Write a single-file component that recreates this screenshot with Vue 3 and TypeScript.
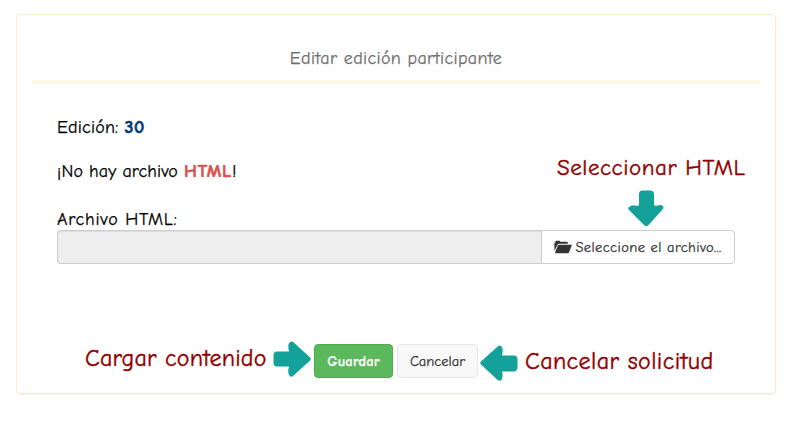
<script setup lang="ts">
import { ref } from 'vue'

const edition = ref<number>(30)
const fileName = ref<string>('')
</script>

<template>
  <main class="page">
    <section class="panel">
      <header class="heading"><span class="title">Editar edición participante</span></header>
      <form class="body" @submit.prevent>
        <p class="line edition"><span class="t-edition">Edición:</span> <b class="number">{{ edition }}</b></p>
        <p class="line notice"><span class="t-notice">¡No hay archivo</span> <b class="missing">HTML</b>!</p>
        <label class="line label" for="file">Archivo HTML:</label>
        <div class="picker">
          <input id="file" v-model="fileName" class="filename" type="text" disabled />
          <button class="btn browse" type="button">
            <svg class="folder" viewBox="0 0 18 14" aria-hidden="true">
              <path d="M.4 11V2.8H1.4V1.6Q1.4 .8 2.2 .8H5.4Q6.2 .8 6.3 1.8H12.8Q13.8 1.8 13.8 2.8V3.8H5.2Q4 3.8 3.5 4.8Z" />
              <path d="M5.2 4.7H17.2Q18 4.7 17.7 5.5L15 12.4Q14.6 13.2 13.7 13.2H1.6Q.8 13.2 1.1 12.4L3.9 5.5Q4.3 4.7 5.2 4.7Z" />
            </svg>
            <span class="t-browse">Seleccione el archivo...</span>
          </button>
        </div>
        <footer class="actions">
          <button class="btn save" type="submit"><span>Guardar</span></button>
          <button class="btn cancel" type="button"><span>Cancelar</span></button>
        </footer>
      </form>
    </section>

    <span class="note note-select">Seleccionar HTML</span>
    <span class="note note-save">Cargar contenido</span>
    <span class="note note-cancel">Cancelar solicitud</span>
    <svg class="arrow arrow-select" viewBox="0 0 36 37" aria-hidden="true">
      <path d="M11 4Q11 .5 14.5 .5H22Q26 .5 26 4.5V15.5Q29 16 32 15Q35 15 35.5 17.5Q35.5 18.5 34 20L20 35.5Q18.5 37 16.5 35.5L1 20Q-.5 18.5 1 17Q4 14.5 8 15.8L11 15.5Z" />
    </svg>
    <svg class="arrow arrow-save" viewBox="0 0 38 36" aria-hidden="true">
      <path d="M4 10.5H16Q15 6.5 15.5 3.5Q16.5 0 20 .7L37 16.5Q38.5 18 37 19.5L20 35Q18 37 16 34Q14.5 30 16 25.5H4Q.5 25.5 .5 22V14Q.5 10.5 4 10.5Z" />
    </svg>
    <svg class="arrow arrow-cancel" viewBox="0 0 38 36" aria-hidden="true">
      <path d="M34 10.5H22Q23 6.5 22.5 3.5Q21.5 0 18.5 .7L1 16.5Q-.5 18 1 19.5L17 34.5Q19 36.5 21.5 35Q23.5 30.5 22 26.5H34Q37.5 26 37.5 22.5V14Q37.5 10.5 34 10.5Z" />
    </svg>
  </main>
</template>

<style>
body { margin: 0; background: #fff; }
</style>

<style scoped>
* { box-sizing: border-box; }
.page {
  position: relative;
  height: 428px;
  padding: 14px 13px 0 16px;
  overflow: hidden;
  font-family: "Comic Sans MS", "Comic Neue", Lato, sans-serif;
  font-size: 18px;
  color: #000;
  -webkit-text-stroke: .25px currentColor;
}
.panel {
  height: 380px;
  padding: 0 15px;
  border: 1px solid #faebcc;
  border-radius: 4px;
  box-shadow: 0 1px 1px rgba(0, 0, 0, .05);
}
.heading {
  height: 69px;
  padding-top: 33px;
  border-bottom: 4px solid #fcf8e3;
  line-height: 22px;
  text-align: center;
  color: #707070;
}
.title { letter-spacing: .35px; }
.body { padding: 32px 25px 0; }
.line { display: block; margin: 0; height: 24px; line-height: 24px; white-space: nowrap; }
.t-edition { letter-spacing: .2px; }
.t-notice { letter-spacing: .08px; }
.notice { margin-top: 20px; }
.label { margin-top: 24px; height: 22px; letter-spacing: .75px; }
.number { color: #003a75; letter-spacing: .6px; -webkit-text-stroke: .6px currentColor; }
.missing { color: #d9534f; letter-spacing: .8px; -webkit-text-stroke: .6px currentColor; }
.picker { display: flex; height: 34px; }
.filename {
  flex: 1;
  min-width: 0;
  border: 1px solid #ccc;
  border-right: 0;
  border-radius: 4px 0 0 4px;
  background: #eee;
  box-shadow: inset 0 1px 1px rgba(0, 0, 0, .075);
}
.btn {
  display: flex;
  align-items: center;
  justify-content: center;
  height: 34px;
  padding: 0;
  border: 1px solid #ccc;
  border-radius: 4px;
  background: #fff;
  color: #333;
  font: 14.5px "Comic Sans MS", "Comic Neue", Lato, sans-serif;
  white-space: nowrap;
}
.browse { width: 194px; gap: 3px; border-radius: 0 4px 4px 0; }
.t-browse { letter-spacing: .4px; }
.folder { width: 18px; height: 14px; fill: #333; }
.actions { display: flex; justify-content: center; gap: 4px; margin-top: 80px; }
.save { width: 79px; border-color: #4cae4c; background: #5cb85c; color: #fff; font-weight: 700; letter-spacing: .15px; }
.cancel { width: 81px; border-color: #e7e7e7; background: #f8f8f8; }
.note { position: absolute; color: #900000; font-size: 24px; line-height: 30px; white-space: nowrap; -webkit-text-stroke: .4px currentColor; }
.note-select { left: 557px; top: 153px; font-size: 23px; letter-spacing: .55px; }
.note-save { left: 85px; top: 343px; letter-spacing: .2px; }
.note-cancel { left: 525px; top: 346px; letter-spacing: .4px; }
.arrow { position: absolute; fill: #13a19a; }
.arrow-select { left: 628px; top: 190px; width: 36px; height: 37px; }
.arrow-save { left: 273px; top: 341px; width: 38px; height: 36px; }
.arrow-cancel { left: 480px; top: 345px; width: 38px; height: 36px; }
</style>
